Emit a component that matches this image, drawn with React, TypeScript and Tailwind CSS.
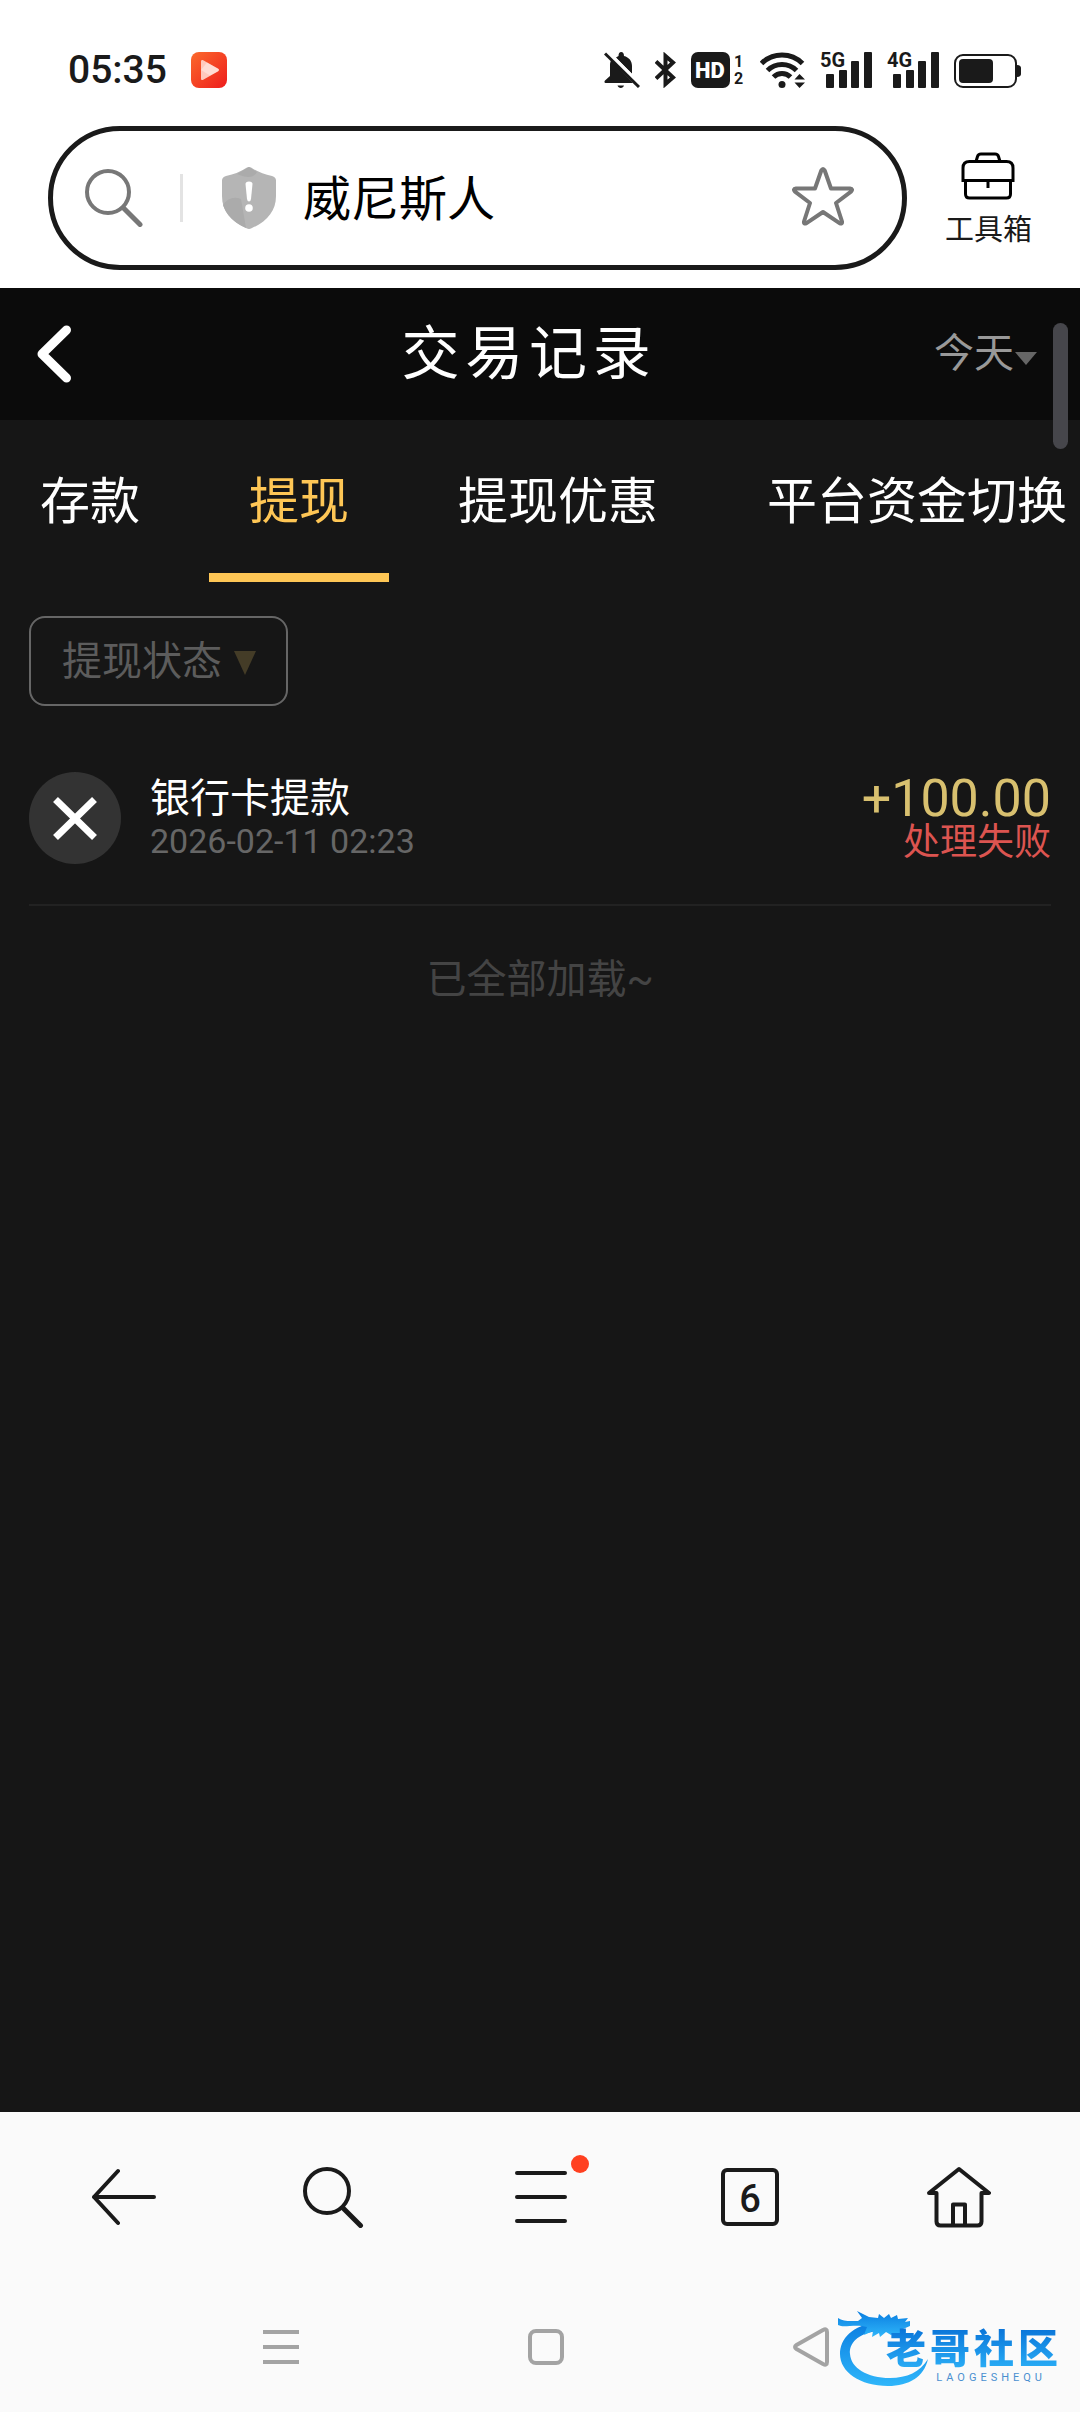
import React from "react";

type SignalProps = {
  label: string;
};

type TabProps = {
  title: string;
  active?: boolean;
};

type RecordProps = {
  title: string;
  time: string;
  amount: string;
  status: string;
};

const tabs = [
  { title: "存款" },
  { title: "提现", active: true },
  { title: "提现优惠" },
  { title: "平台资金切换" },
];

const records = [
  {
    title: "银行卡提款",
    time: "2026-02-11 02:23",
    amount: "+100.00",
    status: "处理失败",
  },
];

function Signal({ label }: SignalProps) {
  return (
    <svg className="w-[52px] h-11" viewBox="0 -4 52 44" fill="#1a1a1a">
      <text x="0" y="15" fontSize="20" fontWeight="700" fontFamily="Roboto, sans-serif">
        {label}
      </text>
      <rect x="6" y="22" width="8" height="14" rx="1" />
      <rect x="19" y="18" width="8" height="18" rx="1" />
      <rect x="31" y="9" width="8" height="27" rx="1" />
      <rect x="44" y="0" width="8" height="36" rx="1" />
    </svg>
  );
}

function StatusBar() {
  return (
    <div className="flex items-center justify-between h-[126px] pt-[14px] pl-[68px] pr-[59px] text-[#1a1a1a]">
      <div className="flex items-center gap-6">
        <span className="text-[39px] leading-[48px] font-medium">05:35</span>
        <svg className="size-9" viewBox="0 0 36 36">
          <defs>
            <linearGradient id="play" x1="0" y1="0" x2="1" y2="1">
              <stop offset="0" stopColor="#fb6a2c" />
              <stop offset="1" stopColor="#ee1c1c" />
            </linearGradient>
          </defs>
          <rect width="36" height="36" rx="8" fill="url(#play)" />
          <path d="M10 9.500c0-1.500 1-2 2.200-1.300l15 8.600c1 .6 1 1.800 0 2.400l-15 8.600c-1.200.7-2.200.2-2.200-1.300z" fill="#ffc9bd" />
          <path d="M10 18l6-7.500 11.200 6.300c1 .6 1 1.800 0 2.400L19 23.500z" fill="#fff" opacity=".35" />
        </svg>
      </div>
      <div className="flex items-center gap-[15px]">
        <svg className="size-9" viewBox="0 0 36 36" fill="#1a1a1a">
          <path d="M6 13c0-2 .5-3.500 1.200-5L29 31H1.500C.5 31 0 29.500 1 28.500L6 24z" />
          <path d="M12 5.500l2.500-1.500c0-2.500 1-4 2.700-4S20 1.500 20 4c5 1.300 8 5 8 10v8z" />
          <path d="M13.500 33.500h6.500c-.5 1.600-1.600 2.500-3.200 2.500s-2.800-.9-3.300-2.500z" />
          <path d="M1 1.500L35 35" stroke="#1a1a1a" strokeWidth="3" />
          <path d="M4.500 0L36 31" stroke="#fff" strokeWidth="2" />
        </svg>
        <svg className="w-[21px] h-9" viewBox="0 0 21 36" fill="none" stroke="#1a1a1a" strokeWidth="4">
          <path d="M1 9.500L18 25.500 10.500 32V4L18 10.500 1 26.500" />
        </svg>
        <svg className="w-[54px] h-9" viewBox="0 0 54 36" fill="#1a1a1a" fontFamily="Roboto, sans-serif">
          <rect width="39" height="36" rx="7" />
          <text x="4" y="26" fontSize="22" fontWeight="900" fill="#fff">HD</text>
          <text x="43" y="15" fontSize="16" fontWeight="700">1</text>
          <text x="43" y="32" fontSize="16" fontWeight="700">2</text>
        </svg>
        <svg className="w-[45px] h-9" viewBox="0 0 45 36" fill="none" stroke="#1a1a1a" strokeWidth="5">
          <path d="M1.500 11.500a29 29 0 0 1 41 0" />
          <path d="M7.500 18.500a20.500 20.500 0 0 1 29 0" />
          <path d="M13.500 25a12 12 0 0 1 17 0" />
          <circle cx="22" cy="32.500" r="3.500" fill="#1a1a1a" stroke="none" />
          <path d="M39.500 18L50 30H29z" fill="#fff" stroke="none" />
          <path d="M34.500 27.500l5-5.500 5.500 5.500zM34.500 30.500h10.500L39.500 36z" fill="#1a1a1a" stroke="none" />
        </svg>
        <Signal label="5G" />
        <Signal label="4G" />
        <svg className="w-[67px] h-9" viewBox="0 0 67 36">
          <rect x="1" y="3" width="61" height="32" rx="8" fill="none" stroke="#1a1a1a" strokeWidth="2" />
          <rect x="5" y="7" width="34" height="24" rx="4" fill="#1a1a1a" />
          <path d="M63 13c3 0 4 1.500 4 3v6c0 1.500-1 3-4 3z" fill="#1a1a1a" />
        </svg>
      </div>
    </div>
  );
}

function SearchBar() {
  return (
    <div className="flex items-center pl-12 pr-12 pb-[18px]">
      <div className="flex-1 min-w-0 flex items-center h-36 border-[5px] border-[#1a1a1a] rounded-full pl-8 pr-12">
        <svg className="size-[58px] shrink-0" viewBox="0 0 58 58" fill="none" stroke="#777" strokeLinecap="round">
          <circle cx="23" cy="23" r="21" strokeWidth="4" />
          <path d="M38.500 39L55 55.500" strokeWidth="5" />
        </svg>
        <span className="w-[3px] h-12 shrink-0 bg-[#e3e3e3] ml-[37px] mr-[39px]"></span>
        <svg className="w-[54px] h-[62px] shrink-0" viewBox="0 0 54 62">
          <path d="M24.500.7q2.500-1.400 5 0Q38 6.500 50 9q4 1 4 4.500V29C54 44 45 54.500 29.500 61.300q-2.500 1.200-5 0C9 54.500 0 44 0 29V13.500Q0 10 4 9 16 6.500 24.500.7z" fill="#b5b5b5" />
          <path d="M1 38Q8 28 19 32L24 61Q6 53 1 38zM15 7L27 0l8 5q-5 9-20 2z" fill="#ababab" />
          <path d="M23.500 17q0-2.500 3.500-2.500t3.500 2.500l-1.500 15q-.4 2.500-2 2.500t-2-2.500z" fill="#fff" />
          <circle cx="27" cy="41" r="3.800" fill="#fff" />
        </svg>
        <input
          type="text"
          aria-label="搜索"
          defaultValue="威尼斯人"
          className="flex-1 min-w-0 ml-[27px] pt-1 text-5xl leading-[64px] text-black bg-transparent outline-none"
        />
        <button type="button" aria-label="收藏">
          <svg className="w-[62px] h-[62px]" viewBox="0 0 62 62" fill="none" stroke="#777" strokeWidth="4" strokeLinejoin="round">
            <path d="M29.300 3.500q1.700-3 3.400 0L39 21.500h19q3.500.5 1 3.200L44 36l6 18.500q.5 3-2.500 1.700L31 45 14.500 56.200q-3 1.300-2.500-1.700L18 36 3 24.700q-2.500-2.700 1-3.200h19z" />
          </svg>
        </button>
      </div>
      <button type="button" className="ml-[38px] pt-1 flex flex-col items-center gap-3">
        <svg className="w-[54px] h-12" viewBox="0 0 54 48" fill="none" stroke="#000" strokeWidth="3">
          <path d="M15 9.500l1.500-5Q17.200 2 20 2h14q2.800 0 3.500 2.500l1.500 5" />
          <path d="M2 28.500V16q0-6.500 6.500-6.500h37Q52 9.500 52 16v12.500zM4.500 28.500V42q0 4 4 4h37q4 0 4-4V28.500M27 28v8" />
        </svg>
        <span className="text-[29px] leading-9 text-[#1a1a1a]">工具箱</span>
      </button>
    </div>
  );
}

function PageHeader() {
  return (
    <header className="flex items-center justify-between h-[132px] bg-[#0b0b0b] pl-9 pr-[42px]">
      <button type="button" aria-label="返回" className="w-[88px]">
        <svg className="w-9 h-[58px]" viewBox="0 0 36 58" fill="none" stroke="#fff" strokeWidth="9" strokeLinecap="round" strokeLinejoin="round">
          <path d="M30.500 5L6 29l24.500 24" />
        </svg>
      </button>
      <h1 className="text-[58px] leading-[72px] tracking-widest text-white">交易记录</h1>
      <div className="flex items-center">
        <select aria-label="日期" className="appearance-none bg-transparent text-[40px] leading-[52px] text-[#999]">
          <option>今天</option>
        </select>
        <svg className="w-6 h-[13px] mt-2" viewBox="0 0 24 13" fill="#666">
          <path d="M1 0h22L12 13z" />
        </svg>
      </div>
    </header>
  );
}

function Tab({ title, active }: TabProps) {
  return (
    <button
      type="button"
      role="tab"
      aria-selected={!!active}
      className={
        active
          ? "shrink-0 h-[162px] px-10 pt-3 text-[50px] text-[#fec655] border-b-[9px] border-[#fec655]"
          : "shrink-0 h-[162px] px-10 pt-3 text-[50px] text-white border-b-[9px] border-transparent"
      }
    >
      {title}
    </button>
  );
}

function RecordItem({ title, time, amount, status }: RecordProps) {
  return (
    <li className="flex items-center justify-between pt-[66px] pb-10 border-b-2 border-[#222]">
      <div className="flex items-center gap-[29px]">
        <svg className="size-[92px]" viewBox="0 0 92 92">
          <circle cx="46" cy="46" r="46" fill="#333" />
          <path d="M26.500 27.500l39 38M65.500 27.500l-39 38" stroke="#fff" strokeWidth="7" />
        </svg>
        <div>
          <h2 className="text-[40px] leading-[46px] text-white">{title}</h2>
          <p className="text-[34px] leading-[38px] text-[#666]">{time}</p>
        </div>
      </div>
      <div className="pt-1 text-right">
        <p className="text-[52px] leading-[46px] text-[#d8c06f]">{amount}</p>
        <p className="text-[37px] leading-[42px] text-[#dc5450]">{status}</p>
      </div>
    </li>
  );
}

function Logo() {
  return (
    <div className="absolute right-[18px] bottom-6 w-[224px] h-20">
      <svg className="w-full h-full" viewBox="0 0 224 80">
        <defs>
          <linearGradient id="dragon" x1="0" y1="0" x2="0" y2="1">
            <stop offset="0" stopColor="#0a7de0" />
            <stop offset="1" stopColor="#2fb6fa" />
          </linearGradient>
        </defs>
        <g fill="url(#dragon)">
          <path d="M40 14C14 17 2 31 2 46c0 18 20 32 48 32 21 0 36-9 40-27-8 13-21 19-38 19-23 0-39-10-40-24-1-11 8-20 26-23z" />
          <path d="M0 10c5 4 14 3 20 3l4-3-5-7 12 6 9 1 1-4 5 4 5-4 2 4 6-3 1 4 10-1-3 4 5-1v5l-7 3 3 1-2 5-9-2-4 2-5-3-6 5-1-4-7 4 1-6-9 4 3-8c-10-3-20 0-26-1-4-1-6-3-13-7z" />
        </g>
      </svg>
      <div className="absolute right-0 top-5 text-right">
        <p className="text-[40px] leading-[44px] font-black tracking-widest text-transparent bg-clip-text bg-linear-to-b from-[#0b74d8] to-[#2db2f8]">
          老哥社区
        </p>
        <p className="pr-4 text-[11px] leading-3 tracking-[4px] text-[#4a90d0]">LAOGESHEQU</p>
      </div>
    </div>
  );
}

function Toolbar() {
  return (
    <nav className="grid grid-cols-5 h-[170px] pl-5 pr-[17px]">
      <button type="button" aria-label="后退" className="flex items-center justify-center">
        <svg className="size-16" viewBox="0 0 64 64" fill="none" stroke="#1a1a1a" strokeWidth="4" strokeLinecap="round" strokeLinejoin="round">
          <path d="M26 6L2 32l24 26M2 32h60" />
        </svg>
      </button>
      <button type="button" aria-label="搜索" className="flex items-center justify-center">
        <svg className="size-[62px]" viewBox="0 0 62 62" fill="none" stroke="#1a1a1a" strokeLinecap="round">
          <circle cx="25" cy="25" r="22" strokeWidth="4" />
          <path d="M41 42l17.500 17.500" strokeWidth="5" />
        </svg>
      </button>
      <button type="button" aria-label="菜单" className="flex items-center justify-center">
        <span className="relative">
          <svg className="w-[52px] h-[52px]" viewBox="0 0 52 52" stroke="#1a1a1a" strokeWidth="4" strokeLinecap="round">
            <path d="M2 2h48M2 26h48M2 50h48" />
          </svg>
          <span className="absolute -top-4 -right-[22px] size-[18px] rounded-full bg-[#ff4020]"></span>
        </span>
      </button>
      <button type="button" aria-label="标签页" className="flex items-center justify-center">
        <span className="flex items-center justify-center size-[58px] pt-1 border-4 border-[#1a1a1a] rounded-md text-[38px] leading-none font-medium text-[#1a1a1a]">
          6
        </span>
      </button>
      <button type="button" aria-label="主页" className="flex items-center justify-center">
        <svg className="w-16 h-[62px]" viewBox="0 0 64 62" fill="none" stroke="#1a1a1a" strokeWidth="4" strokeLinejoin="round">
          <path d="M9.500 27H2L32 3l30 24h-7.500v28.500q0 4-4 4h-37q-4 0-4-4z" />
          <path d="M26 59V38.500h12V59" />
        </svg>
      </button>
    </nav>
  );
}

function SystemNav() {
  return (
    <div className="relative">
      <div className="grid grid-cols-3 h-[130px] pl-[148px] pr-[136px]">
        <button type="button" aria-label="最近任务" className="flex items-center justify-center">
          <svg className="size-9" viewBox="0 0 36 36" stroke="#a3a3a3" strokeWidth="4">
            <path d="M0 3h36M0 18h36M0 33h36" />
          </svg>
        </button>
        <button type="button" aria-label="桌面" className="flex items-center justify-center">
          <span className="size-9 border-4 border-[#a3a3a3] rounded-lg"></span>
        </button>
        <button type="button" aria-label="返回上一级" className="flex items-center justify-center">
          <svg className="w-9 h-10" viewBox="0 0 36 40" fill="none" stroke="#a3a3a3" strokeWidth="4" strokeLinejoin="round">
            <path d="M30 3Q34 1 34 5v30q0 4-4 2L3.500 22q-3-2 0-4z" />
          </svg>
        </button>
      </div>
      <Logo />
    </div>
  );
}

function App() {
  return (
    <div className="min-h-screen flex flex-col bg-white font-['Roboto','Noto_Sans_CJK_SC',sans-serif]">
      <StatusBar />
      <SearchBar />
      <main className="relative flex-1 flex flex-col bg-[#161616]">
        <PageHeader />
        <div role="tablist" className="flex gap-[29px] overflow-hidden">
          {tabs.map((tab) => (
            <Tab key={tab.title} {...tab} />
          ))}
        </div>
        <div className="px-[29px] pt-[34px]">
          <div className="relative w-fit">
            <select
              aria-label="提现状态"
              className="block appearance-none h-[90px] pl-[31px] pt-[2px] pr-16 border-2 border-[#666] rounded-2xl bg-transparent text-[40px] text-[#5c5c5c]"
            >
              <option>提现状态</option>
            </select>
            <svg className="absolute right-8 top-[35px] w-[22px] h-6 pointer-events-none" viewBox="0 0 22 24" fill="#443c27">
              <path d="M0 0h22L11 24z" />
            </svg>
          </div>
          <ul>
            {records.map((record) => (
              <RecordItem key={record.time} {...record} />
            ))}
          </ul>
          <p className="pt-12 text-center text-[40px] leading-[52px] text-[#444]">已全部加载~</p>
        </div>
        {/* scrollbar thumb */}
        <span className="absolute top-[35px] right-3 w-[15px] h-[126px] rounded-full bg-[#46464b]"></span>
      </main>
      <footer className="bg-[#fafafa]">
        <Toolbar />
        <SystemNav />
      </footer>
    </div>
  );
}

export default App;
